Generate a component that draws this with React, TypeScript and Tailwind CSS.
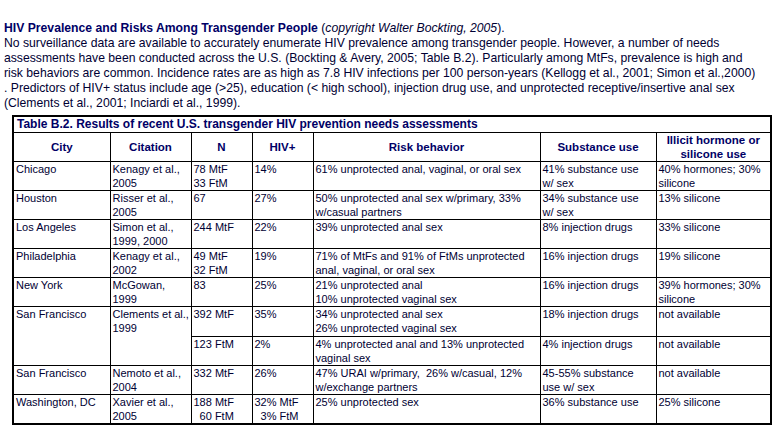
import React from 'react'

// cells use '|' for the line breaks seen in the original table
interface Row {
  city?: string
  citation?: string
  span?: number
  n: string
  hiv: string
  risk: string
  substance: string
  hormone: string
  h: string
}

const rows: Row[] = [
  {
    city: 'Chicago',
    citation: 'Kenagy et al.,|2005',
    n: '78 MtF|33 FtM',
    hiv: '14%',
    risk: '61% unprotected anal, vaginal, or oral sex',
    substance: '41% substance use|w/ sex',
    hormone: '40% hormones; 30%|silicone',
    h: 'h-[29px]',
  },
  {
    city: 'Houston',
    citation: 'Risser et al.,|2005',
    n: '67',
    hiv: '27%',
    risk: '50% unprotected anal sex w/primary, 33%|w/casual partners',
    substance: '34% substance use|w/ sex',
    hormone: '13% silicone',
    h: 'h-[28px]',
  },
  {
    city: 'Los Angeles',
    citation: 'Simon et al.,|1999, 2000',
    n: '244 MtF',
    hiv: '22%',
    risk: '39% unprotected anal sex',
    substance: '8% injection drugs',
    hormone: '33% silicone',
    h: 'h-[29px]',
  },
  {
    city: 'Philadelphia',
    citation: 'Kenagy et al.,|2002',
    n: '49 MtF|32 FtM',
    hiv: '19%',
    risk: '71% of MtFs and 91% of FtMs unprotected|anal, vaginal, or oral sex',
    substance: '16% injection drugs',
    hormone: '19% silicone',
    h: 'h-[29px]',
  },
  {
    city: 'New York',
    citation: 'McGowan,|1999',
    n: '83',
    hiv: '25%',
    risk: '21% unprotected anal|10% unprotected vaginal sex',
    substance: '16% injection drugs',
    hormone: '39% hormones; 30%|silicone',
    h: 'h-[29px]',
  },
  {
    city: 'San Francisco',
    citation: 'Clements et al.,|1999',
    span: 2,
    n: '392 MtF',
    hiv: '35%',
    risk: '34% unprotected anal sex|26% unprotected vaginal sex',
    substance: '18% injection drugs',
    hormone: 'not available',
    h: 'h-[30px]',
  },
  {
    n: '123 FtM',
    hiv: '2%',
    risk: '4% unprotected anal and 13% unprotected|vaginal sex',
    substance: '4% injection drugs',
    hormone: 'not available',
    h: 'h-[29px]',
  },
  {
    city: 'San Francisco',
    citation: 'Nemoto et al.,|2004',
    n: '332 MtF',
    hiv: '26%',
    risk: '47% URAI w/primary,  26% w/casual, 12%|w/exchange partners',
    substance: '45-55% substance|use w/ sex',
    hormone: 'not available',
    h: 'h-[29px]',
  },
  {
    city: 'Washington, DC',
    citation: 'Xavier et al.,|2005',
    n: '188 MtF|  60 FtM',
    hiv: '32% MtF|  3% FtM',
    risk: '25% unprotected sex',
    substance: '36% substance use',
    hormone: '25% silicone',
    h: 'h-[29px]',
  },
]

const td = 'border border-black align-top whitespace-pre pl-[2px] pr-[1px] pt-0'
const th = 'border border-black align-middle text-center font-bold text-[#000066]'

function Lines({ text }: { text: string }) {
  const parts = text.split('|')
  return (
    <>
      {parts.map((p, i) => (
        <React.Fragment key={i}>
          {i > 0 && <br />}
          {p}
        </React.Fragment>
      ))}
    </>
  )
}

export default function App() {
  return (
    <div className="min-h-[436px] bg-white pt-[21px] text-[#000033] [font-family:'Liberation_Sans',Arial,sans-serif]">
      <div className="whitespace-nowrap pl-[4px] text-[12.2px] leading-[15px]">
        <div>
          <span className="font-bold text-[#000066]">HIV Prevalence and Risks Among Transgender People</span>{' '}
          (<span className="italic">copyright Walter Bockting, 2005</span>).
        </div>
        <div>No surveillance data are available to accurately enumerate HIV prevalence among transgender people. However, a number of needs</div>
        <div>assessments have been conducted across the U.S. (Bockting &amp; Avery, 2005; Table B.2). Particularly among MtFs, prevalence is high and</div>
        <div>risk behaviors are common. Incidence rates are as high as 7.8 HIV infections per 100 person-years (Kellogg et al., 2001; Simon et al.,2000)</div>
        <div>. Predictors of HIV+ status include age (&gt;25), education (&lt; high school), injection drug use, and unprotected receptive/insertive anal sex</div>
        <div>(Clements et al., 2001; Inciardi et al., 1999).</div>
      </div>

      <table className="ml-[12px] mt-[4px] w-[758px] table-fixed border-collapse border-2 border-black text-[11px] leading-[14px]">
        <colgroup>
          <col className="w-[97px]" />
          <col className="w-[81px]" />
          <col className="w-[61px]" />
          <col className="w-[61px]" />
          <col className="w-[227px]" />
          <col className="w-[116px]" />
          <col className="w-[115px]" />
        </colgroup>
        <tbody>
          <tr className="h-[16px]">
            <td colSpan={7} className="border border-black pl-[3px] text-[12px] font-bold leading-[14px] text-[#000066]">
              Table B.2. Results of recent U.S. transgender HIV prevention needs assessments
            </td>
          </tr>
          <tr className="h-[28px] text-[11.5px]">
            <th className={th}>City</th>
            <th className={th}>Citation</th>
            <th className={th}>N</th>
            <th className={th}>HIV+</th>
            <th className={th}>Risk behavior</th>
            <th className={th}>Substance use</th>
            <th className={th}>Illicit hormone or<br />silicone use</th>
          </tr>
          {rows.map((r, i) => (
            <tr key={i} className={r.h}>
              {r.city !== undefined && (
                <td rowSpan={r.span} className={td}><Lines text={r.city} /></td>
              )}
              {r.citation !== undefined && (
                <td rowSpan={r.span} className={td}><Lines text={r.citation} /></td>
              )}
              <td className={td}><Lines text={r.n} /></td>
              <td className={td}><Lines text={r.hiv} /></td>
              <td className={td}><Lines text={r.risk} /></td>
              <td className={td}><Lines text={r.substance} /></td>
              <td className={td}><Lines text={r.hormone} /></td>
            </tr>
          ))}
        </tbody>
      </table>
    </div>
  )
}
